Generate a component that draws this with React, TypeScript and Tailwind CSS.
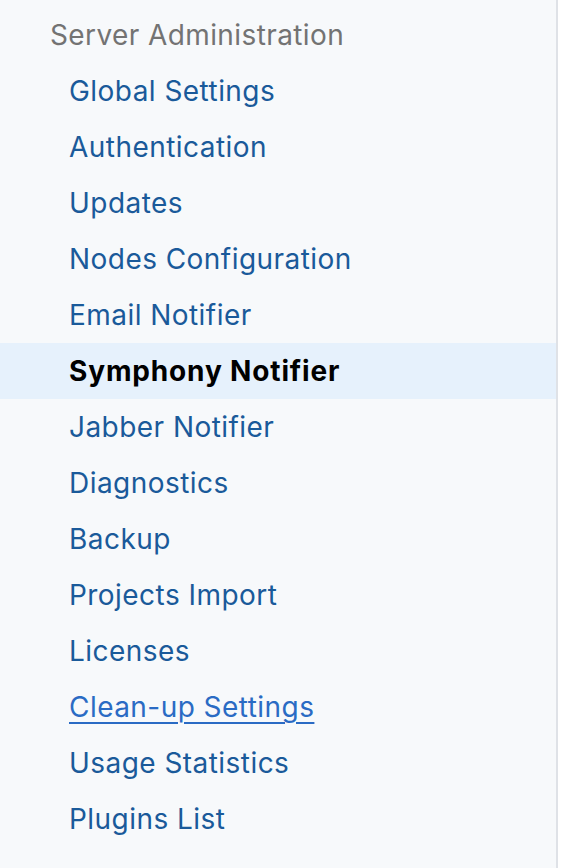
import React from "react";

const items = [
  "Global Settings",
  "Authentication",
  "Updates",
  "Nodes Configuration",
  "Email Notifier",
  "Symphony Notifier",
  "Jabber Notifier",
  "Diagnostics",
  "Backup",
  "Projects Import",
  "Licenses",
  "Clean-up Settings",
  "Usage Statistics",
  "Plugins List",
];

export default function App() {
  return (
    <div className="flex h-[868px] w-[578px] bg-white" style={{ fontFamily: "Inter, 'Noto Sans', sans-serif" }}>
      <div className="h-full w-[558px] border-r-2 border-[#dfe2e7] bg-[#f7f9fb] pt-[7px]">
        <div className="flex h-[56px] items-center pl-[50px] text-[28px] tracking-[0.4px] text-[#737373]">
          Server Administration
        </div>
        <ul>
          {items.map((it) => {
            const active = it === "Symphony Notifier";
            const hover = it === "Clean-up Settings";
            return (
              <li
                key={it}
                className={
                  active
                    ? "flex h-[56px] items-center bg-[#e6f1fc] pl-[69px] text-[28px] font-bold tracking-[0.85px] text-black"
                    : hover
                    ? "flex h-[56px] items-center pl-[69px] text-[28px] tracking-[0.45px] text-[#2a6bc4] underline decoration-2 underline-offset-[5px]"
                    : "flex h-[56px] items-center pl-[69px] text-[28px] tracking-[0.45px] text-[#1a5a9a]"
                }
              >
                {it}
              </li>
            );
          })}
        </ul>
      </div>
    </div>
  );
}
